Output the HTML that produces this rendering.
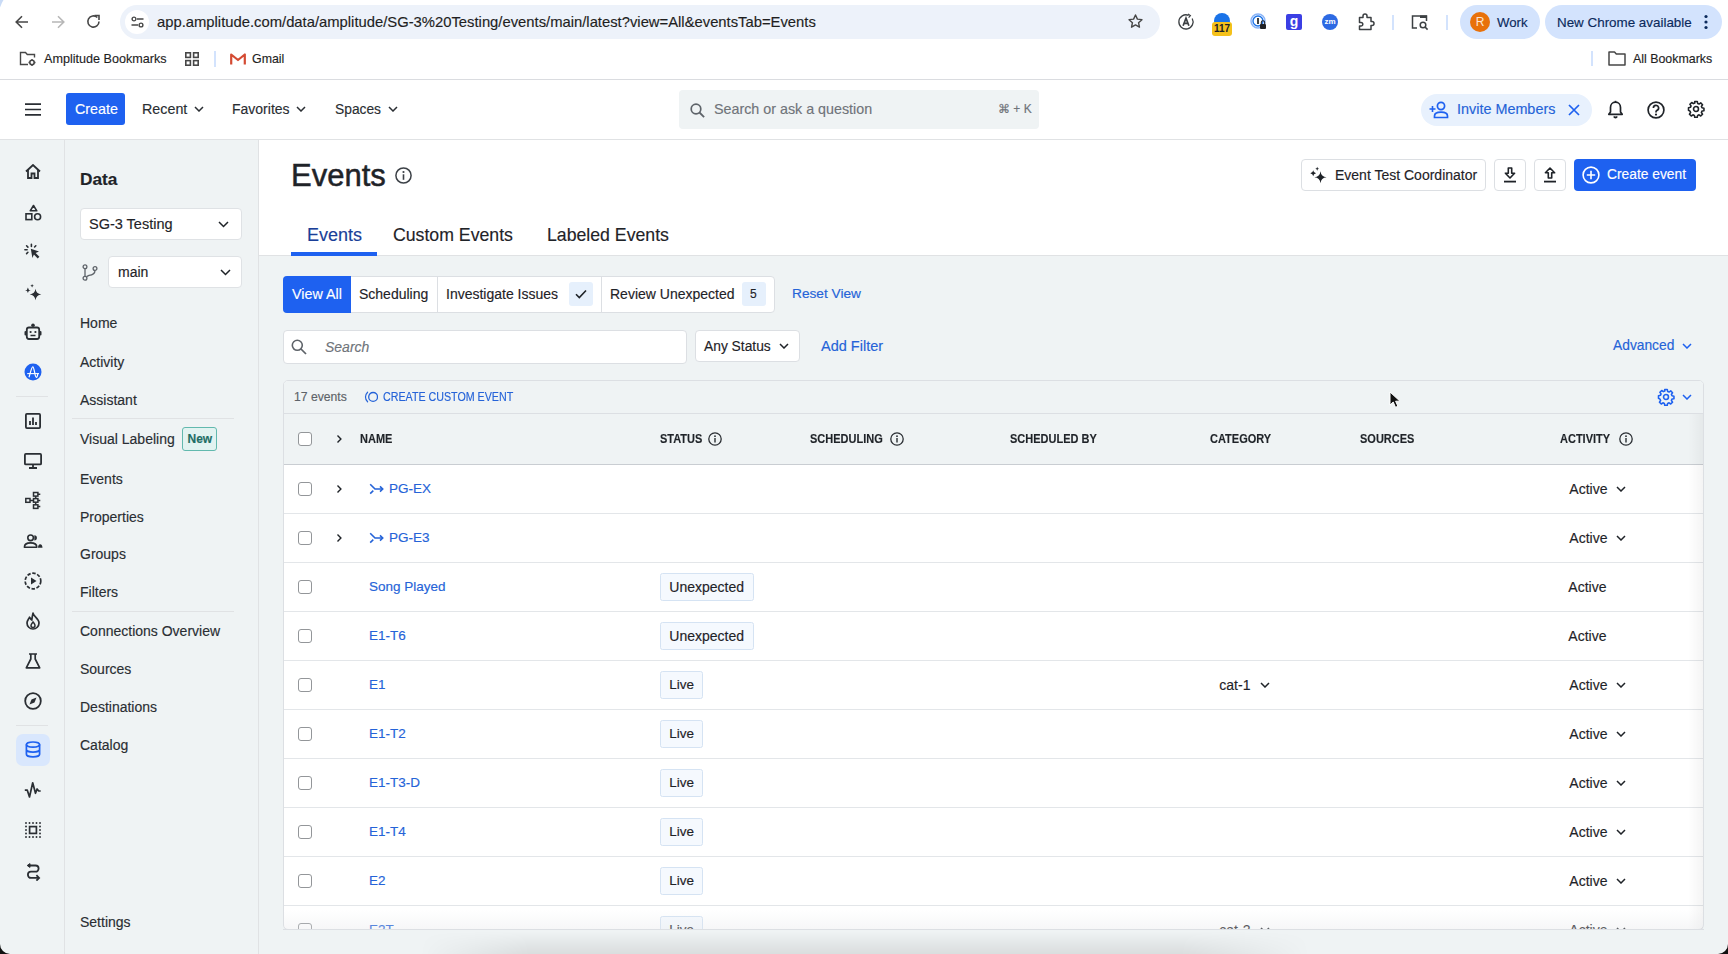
<!DOCTYPE html>
<html><head><meta charset="utf-8">
<style>
*{box-sizing:border-box;margin:0;padding:0}
html,body{width:1728px;height:954px;overflow:hidden;background:#fff;font-family:"Liberation Sans",sans-serif;color:#1f2328}
.a{position:absolute}
svg{display:block}
.t{position:absolute;white-space:nowrap;line-height:1;-webkit-text-stroke:0.15px currentColor}
</style></head><body>
<!-- CHROME TOOLBAR -->
<div class="a" id="chrome" style="left:0;top:0;width:1728px;height:80px;background:#fff;border-bottom:1px solid #dadce0">
  <!-- nav buttons -->
  <svg class="a" style="left:14px;top:14px" width="16" height="16" viewBox="0 0 16 16"><path d="M14 8H2.5M8 2.2L2.2 8L8 13.8" fill="none" stroke="#474747" stroke-width="1.6"/></svg>
  <svg class="a" style="left:50px;top:14px" width="16" height="16" viewBox="0 0 16 16"><path d="M2 8h11.5M8 2.2L13.8 8L8 13.8" fill="none" stroke="#b7b7b7" stroke-width="1.6"/></svg>
  <svg class="a" style="left:85px;top:13px" width="17" height="17" viewBox="0 0 17 17"><path d="M14 8.5A5.6 5.6 0 1 1 12.3 4.5" fill="none" stroke="#474747" stroke-width="1.6"/><path d="M9.5 2.5h4.5v4.5" fill="none" stroke="#474747" stroke-width="1.6"/></svg>
  <!-- url pill -->
  <div class="a" style="left:120px;top:5px;width:1040px;height:34px;border-radius:17px;background:#edf2fa"></div>
  <div class="a" style="left:125px;top:10px;width:24px;height:24px;border-radius:12px;background:#fff"></div>
  <svg class="a" style="left:131px;top:16px" width="13" height="12" viewBox="0 0 13 12"><circle cx="3" cy="3" r="1.9" fill="none" stroke="#474747" stroke-width="1.4"/><path d="M6 3h6.5M0.5 9H7" stroke="#474747" stroke-width="1.4"/><circle cx="10" cy="9" r="1.9" fill="none" stroke="#474747" stroke-width="1.4"/></svg>
  <div class="t" style="left:157px;top:15px;font-size:14.8px;color:#1f1f1f">app.amplitude.com/data/amplitude/SG-3%20Testing/events/main/latest?view=All&amp;eventsTab=Events</div>
  <svg class="a" style="left:1127px;top:13px" width="17" height="17" viewBox="0 0 24 24"><path d="M12 2.8l2.7 5.9 6.4.7-4.8 4.3 1.3 6.3L12 16.8 6.4 20l1.3-6.3L2.9 9.4l6.4-.7z" fill="none" stroke="#474747" stroke-width="2" stroke-linejoin="round"/></svg>

  <!-- extension icons -->
  <svg class="a" style="left:1177px;top:13px" width="18" height="18" viewBox="0 0 18 18"><path d="M15.2 5.5A7.1 7.1 0 1 1 11.6 2.3" fill="none" stroke="#3c4043" stroke-width="1.3"/><path d="M11 1l2.4 1.6-1.8 2" fill="none" stroke="#3c4043" stroke-width="1.2"/><path d="M6.1 12.8L9 5.2l2.9 7.6M7.1 10.3h3.8" fill="none" stroke="#3c4043" stroke-width="1.7"/></svg>
  <div class="a" style="left:1214px;top:13px;width:16px;height:16px;border-radius:8px;background:#1a73e8"></div>
  <div class="a" style="left:1212px;top:22px;width:20px;height:14px;border-radius:3px;background:#f5c11a;font-size:10px;font-weight:bold;color:#202124;text-align:center;line-height:14px">117</div>
  <svg class="a" style="left:1250px;top:13px" width="18" height="18" viewBox="0 0 18 18"><circle cx="8" cy="8" r="7" fill="none" stroke="#8ab4f8" stroke-width="1.5"/><circle cx="8" cy="8" r="5" fill="none" stroke="#1a73e8" stroke-width="1.4"/><rect x="7" y="5" width="2" height="6" fill="#3c4043"/><rect x="10" y="11" width="6" height="5" rx="1" fill="#202124"/><path d="M11.3 11V9.5a1.7 1.7 0 0 1 3.4 0V11" fill="none" stroke="#202124" stroke-width="1.1"/></svg>
  <div class="a" style="left:1286px;top:14px;width:16px;height:16px;border-radius:2px;background:#3b3fe4;color:#fff;font-size:14px;font-weight:bold;text-align:center;line-height:14px">g</div>
  <div class="a" style="left:1322px;top:14px;width:16px;height:16px;border-radius:8px;background:#2d6ae3;color:#fff;font-size:8px;font-weight:bold;text-align:center;line-height:16px">zm</div>
  <svg class="a" style="left:1358px;top:13px" width="18" height="18" viewBox="0 0 18 18"><path d="M1.5 4.5h3.5V3a2 2 0 0 1 4 0v1.5h4v4h1a2 2 0 0 1 0 4h-1v4h-11.5v-3.5h1.5a1.8 1.8 0 0 0 0-3.6H1.5z" fill="none" stroke="#3c4043" stroke-width="1.5" stroke-linejoin="round"/></svg>
  <div class="a" style="left:1392px;top:15px;width:2px;height:15px;background:#d3e3fd"></div>
  <svg class="a" style="left:1411px;top:14px" width="19" height="17" viewBox="0 0 19 17"><path d="M6 14H1.5V2h14v5" fill="none" stroke="#3c4043" stroke-width="1.5"/><rect x="9" y="1.5" width="7" height="2.5" fill="#3c4043"/><circle cx="12" cy="11" r="2.8" fill="none" stroke="#3c4043" stroke-width="1.5"/><path d="M14 13l2.6 2.6" stroke="#3c4043" stroke-width="1.6"/></svg>
  <div class="a" style="left:1446px;top:15px;width:2px;height:15px;background:#d3e3fd"></div>
  <div class="a" style="left:1460px;top:5px;width:80px;height:34px;border-radius:17px;background:#d3e3fd"></div>
  <div class="a" style="left:1470px;top:12px;width:20px;height:20px;border-radius:10px;background:#e8710a;color:#fde6d2;font-size:12px;text-align:center;line-height:20px">R</div>
  <div class="t" style="left:1497px;top:16px;font-size:13.2px;color:#0b2a5c">Work</div>
  <div class="a" style="left:1545px;top:5px;width:177px;height:34px;border-radius:17px;background:#d3e3fd"></div>
  <div class="t" style="left:1557px;top:16px;font-size:13.4px;color:#0b2a5c">New Chrome available</div>
  <svg class="a" style="left:1702px;top:14px" width="8" height="16" viewBox="0 0 8 16"><circle cx="4" cy="2.5" r="1.6" fill="#0b2a5c"/><circle cx="4" cy="8" r="1.6" fill="#0b2a5c"/><circle cx="4" cy="13.5" r="1.6" fill="#0b2a5c"/></svg>
  <!-- bookmarks bar -->
  <svg class="a" style="left:19px;top:51px" width="18" height="16" viewBox="0 0 18 16"><path d="M9 13.5H1.5V1.5h5l1.8 2h7.2v3" fill="none" stroke="#474747" stroke-width="1.4"/><circle cx="13" cy="11.5" r="2.2" fill="none" stroke="#474747" stroke-width="1.6"/><path d="M13 8v1.2M13 13.8V15M9.5 11.5h1.2M15.3 11.5h1.2" stroke="#474747" stroke-width="1.4"/></svg>
  <div class="t" style="left:44px;top:53px;font-size:12.6px;color:#1f1f1f">Amplitude Bookmarks</div>
  <svg class="a" style="left:185px;top:52px" width="14" height="14" viewBox="0 0 14 14"><rect x="0.8" y="0.8" width="4.6" height="4.6" fill="none" stroke="#474747" stroke-width="1.6"/><rect x="8.6" y="0.8" width="4.6" height="4.6" fill="none" stroke="#474747" stroke-width="1.6"/><rect x="0.8" y="8.6" width="4.6" height="4.6" fill="none" stroke="#474747" stroke-width="1.6"/><rect x="8.6" y="8.6" width="4.6" height="4.6" fill="none" stroke="#474747" stroke-width="1.6"/></svg>
  <div class="a" style="left:214px;top:51px;width:2px;height:16px;background:#d3e3fd"></div>
  <svg class="a" style="left:230px;top:53px" width="16" height="12" viewBox="0 0 16 12"><path d="M1.2 11.5V1.5L8 7l6.8-5.5v10" fill="none" stroke="#d44b33" stroke-width="2.2" stroke-linejoin="round"/></svg>
  <div class="t" style="left:252px;top:53px;font-size:12.4px;color:#1f1f1f">Gmail</div>
  <div class="a" style="left:1591px;top:51px;width:2px;height:15px;background:#d3e3fd"></div>
  <svg class="a" style="left:1608px;top:51px" width="18" height="15" viewBox="0 0 18 15"><path d="M1 1h5.5l1.8 2H17v11H1z" fill="none" stroke="#474747" stroke-width="1.5" stroke-linejoin="round"/></svg>
  <div class="t" style="left:1633px;top:53px;font-size:12.4px;color:#1f1f1f">All Bookmarks</div>
</div>

<!-- APP HEADER -->
<div class="a" style="left:0;top:80px;width:1728px;height:60px;background:#fff;border-bottom:1px solid #e0e2e4">
  <svg class="a" style="left:25px;top:23px" width="16" height="13" viewBox="0 0 16 13"><path d="M0 1.2h16M0 6.5h16M0 11.8h16" stroke="#2a2e33" stroke-width="1.7"/></svg>
  <div class="a" style="left:66px;top:13px;width:59px;height:32px;border-radius:3px;background:#1e61f0"></div>
  <div class="t" style="left:75px;top:22px;font-size:14.3px;color:#fff">Create</div>
  <div class="t" style="left:142px;top:22px;font-size:14.3px;color:#2a2e33">Recent</div>
  <svg class="a" style="left:194px;top:26px" width="10" height="6" viewBox="0 0 10 6"><path d="M1 1l4 4 4-4" fill="none" stroke="#2a2e33" stroke-width="1.5"/></svg>
  <div class="t" style="left:232px;top:22px;font-size:14px;color:#2a2e33">Favorites</div>
  <svg class="a" style="left:296px;top:26px" width="10" height="6" viewBox="0 0 10 6"><path d="M1 1l4 4 4-4" fill="none" stroke="#2a2e33" stroke-width="1.5"/></svg>
  <div class="t" style="left:335px;top:22.5px;font-size:13.8px;color:#2a2e33">Spaces</div>
  <svg class="a" style="left:388px;top:26px" width="10" height="6" viewBox="0 0 10 6"><path d="M1 1l4 4 4-4" fill="none" stroke="#2a2e33" stroke-width="1.5"/></svg>
  <!-- search -->
  <div class="a" style="left:679px;top:10px;width:360px;height:39px;border-radius:4px;background:#eff3f4"></div>
  <svg class="a" style="left:690px;top:23px" width="15" height="15" viewBox="0 0 15 15"><circle cx="6" cy="6" r="4.8" fill="none" stroke="#5e6369" stroke-width="1.7"/><path d="M9.5 9.5l4.6 4.6" stroke="#5e6369" stroke-width="1.8"/></svg>
  <div class="t" style="left:714px;top:22px;font-size:14.3px;color:#6f747a">Search or ask a question</div>
  <div class="t" style="left:998px;top:23px;font-size:12px;color:#6f747a">&#8984; + K</div>
  <!-- invite -->
  <div class="a" style="left:1421px;top:14px;width:171px;height:32px;border-radius:16px;background:#e8f1fd"></div>
  <svg class="a" style="left:1429px;top:21px" width="20" height="18" viewBox="0 0 20 18"><circle cx="12" cy="5" r="3.6" fill="none" stroke="#1e61f0" stroke-width="1.7"/><path d="M5.5 16.5v-1.5c0-2.3 2-3.8 6.5-3.8s6.5 1.5 6.5 3.8v1.5z" fill="none" stroke="#1e61f0" stroke-width="1.7"/><path d="M0.5 8h6M3.5 5v6" stroke="#1e61f0" stroke-width="1.6"/></svg>
  <div class="t" style="left:1457px;top:22px;font-size:14.4px;color:#2563d8">Invite Members</div>
  <svg class="a" style="left:1568px;top:24px" width="12" height="12" viewBox="0 0 12 12"><path d="M1 1l10 10M11 1L1 11" stroke="#1e61f0" stroke-width="1.7"/></svg>
  <svg class="a" style="left:1607px;top:20px" width="17" height="19" viewBox="0 0 17 19"><path d="M8.5 2.2c-3 0-5 2.3-5 5.3v4.5L1.8 14.3h13.4L13.5 12V7.5c0-3-2-5.3-5-5.3z" fill="none" stroke="#1f2328" stroke-width="1.7" stroke-linejoin="round"/><path d="M8.5 0.8v1.5" stroke="#1f2328" stroke-width="1.6"/><path d="M6.8 16.5a1.8 1.8 0 0 0 3.4 0" fill="#1f2328" stroke="#1f2328" stroke-width="1.4"/></svg>
  <svg class="a" style="left:1647px;top:21px" width="18" height="18" viewBox="0 0 18 18"><circle cx="9" cy="9" r="7.9" fill="none" stroke="#1f2328" stroke-width="1.7"/><path d="M6.4 7a2.6 2.6 0 1 1 3.6 2.4c-.7.3-1 .8-1 1.5v.6" fill="none" stroke="#1f2328" stroke-width="1.7"/><circle cx="9" cy="13.6" r="1.1" fill="#1f2328"/></svg>
  <svg class="a" style="left:1687px;top:20px" width="18" height="18" viewBox="0 0 24 24"><path d="M10.3 2h3.4l.5 2.6 1.9.8 2.2-1.5 2.4 2.4-1.5 2.2.8 1.9 2.6.5v3.4l-2.6.5-.8 1.9 1.5 2.2-2.4 2.4-2.2-1.5-1.9.8-.5 2.6h-3.4l-.5-2.6-1.9-.8-2.2 1.5-2.4-2.4 1.5-2.2-.8-1.9L2 13.7v-3.4l2.6-.5.8-1.9-1.5-2.2 2.4-2.4 2.2 1.5 1.9-.8z" fill="none" stroke="#1f2328" stroke-width="2.1" stroke-linejoin="round"/><circle cx="12" cy="12" r="3.3" fill="none" stroke="#1f2328" stroke-width="2.1"/></svg>
</div>
<!-- LEFT RAIL -->
<div class="a" id="rail" style="left:0;top:140px;width:65px;height:814px;background:#eff3f4;border-right:1px solid #e0e2e4">
  <!-- home 171 -->
  <svg class="a" style="left:25px;top:24px" width="16" height="15" viewBox="0 0 16 15"><path d="M1 7.5L8 1l7 6.5" fill="none" stroke="#2a2e33" stroke-width="1.8"/><path d="M3 6v8h3.5V9.5h3V14H13V6" fill="none" stroke="#2a2e33" stroke-width="1.8"/></svg>
  <!-- shapes 212 -->
  <svg class="a" style="left:25px;top:64px" width="17" height="17" viewBox="0 0 17 17"><path d="M8.5 1.5l3.3 5.3H5.2z" fill="none" stroke="#2a2e33" stroke-width="1.6" stroke-linejoin="round"/><rect x="1" y="9.8" width="5.8" height="5.8" fill="none" stroke="#2a2e33" stroke-width="1.6"/><circle cx="12.6" cy="12.7" r="3" fill="none" stroke="#2a2e33" stroke-width="1.6"/></svg>
  <!-- cursor 252 -->
  <svg class="a" style="left:24px;top:103px" width="17" height="17" viewBox="0 0 17 17"><path d="M6.8 5.8l8.2 2.6-3.4 1.5 3.8 3.8-1.7 1.7-3.8-3.8-1.5 3.4z" fill="#2a2e33"/><path d="M7.4 1.3v2.1M2.6 2.8l1.3 1.3M11.8 2.8l-1.2 1.2M0.9 6.8h2.2M2.6 10.6l1.3-1.3" stroke="#2a2e33" stroke-width="1.6" stroke-linecap="round"/></svg>
  <!-- sparkle 292 -->
  <svg class="a" style="left:23px;top:143px" width="20" height="20" viewBox="0 0 20 20"><path d="M12.5 5.8Q13.1 11 18.3 11.4Q13.1 11.9 12.5 17.2Q11.9 11.9 6.7 11.4Q11.9 11 12.5 5.8z" fill="#2a2e33"/><path d="M4.9 4.4Q5.2 7 7.7 7.3Q5.2 7.6 4.9 10.1Q4.6 7.6 2.1 7.3Q4.6 7 4.9 4.4z" fill="#2a2e33"/><path d="M9.1 1Q9.3 2.6 10.9 2.8Q9.3 3 9.1 4.6Q8.9 3 7.3 2.8Q8.9 2.6 9.1 1z" fill="#2a2e33"/></svg>
  <!-- robot 332 -->
  <svg class="a" style="left:24px;top:183px" width="18" height="18" viewBox="0 0 18 18"><circle cx="9" cy="2.2" r="1.8" fill="#2a2e33"/><rect x="2.8" y="4.5" width="12.4" height="11.5" rx="2.2" fill="none" stroke="#2a2e33" stroke-width="1.8"/><rect x="0.5" y="8" width="2" height="4.5" rx="1" fill="#2a2e33"/><rect x="15.5" y="8" width="2" height="4.5" rx="1" fill="#2a2e33"/><circle cx="6.6" cy="9" r="1.1" fill="#2a2e33"/><circle cx="11.4" cy="9" r="1.1" fill="#2a2e33"/><path d="M6.5 12.5h5" stroke="#2a2e33" stroke-width="1.5"/></svg>
  <!-- amplitude logo 371 -->
  <svg class="a" style="left:24px;top:223px" width="18" height="18" viewBox="0 0 18 18"><circle cx="9" cy="9" r="8.5" fill="#1e61f0"/><path d="M5 14.3C6.5 9.5 7.5 3.8 8.8 3.8c1.6 0 1.9 10.6 3.6 10.6.9 0 1.2-2.2 1.4-3.6" fill="none" stroke="#fff" stroke-width="1.2"/><path d="M3.2 10.6h11.8" stroke="#fff" stroke-width="1.1"/></svg>
  <div class="a" style="left:16px;top:256px;width:32px;height:1px;background:#e0e2e4"></div>
  <!-- chart 421 -->
  <svg class="a" style="left:25px;top:273px" width="16" height="16" viewBox="0 0 16 16"><rect x="0.9" y="0.9" width="14.2" height="14.2" rx="1" fill="none" stroke="#2a2e33" stroke-width="1.8"/><path d="M5 12V8M8 12V4.5M11 12V9" stroke="#2a2e33" stroke-width="1.8"/></svg>
  <!-- monitor 461 -->
  <svg class="a" style="left:24px;top:313px" width="18" height="16" viewBox="0 0 18 16"><rect x="0.9" y="0.9" width="16.2" height="10.5" rx="1" fill="none" stroke="#2a2e33" stroke-width="1.8"/><path d="M9 11.5v3.5M5 15h8" stroke="#2a2e33" stroke-width="1.8"/></svg>
  <!-- network 500 -->
  <svg class="a" style="left:24px;top:351px" width="18" height="19" viewBox="0 0 18 19"><rect x="1.8" y="7.5" width="4.2" height="3.8" fill="none" stroke="#2a2e33" stroke-width="1.5"/><rect x="9.5" y="1.5" width="4.4" height="3.6" fill="none" stroke="#2a2e33" stroke-width="1.5"/><rect x="9.5" y="7.6" width="4.4" height="3.6" fill="none" stroke="#2a2e33" stroke-width="1.5"/><rect x="9.5" y="13.8" width="4.4" height="3.6" fill="none" stroke="#2a2e33" stroke-width="1.5"/><path d="M6 9.4h3.5M11.7 5.1v2.5M11.7 11.2v2.6M13.9 3.3h2.4M13.9 9.4h2.4M13.9 15.6h2.4" stroke="#2a2e33" stroke-width="1.5"/></svg>
  <!-- users 540 -->
  <svg class="a" style="left:23px;top:392px" width="20" height="17" viewBox="0 0 20 17"><circle cx="7.6" cy="5.8" r="2.8" fill="none" stroke="#2a2e33" stroke-width="1.6"/><path d="M11.3 3.2a2.6 2.6 0 0 1 0 5.2z" fill="#2a2e33"/><path d="M1.4 15.2c0-2.6 2.6-4.3 6.2-4.3s6.2 1.7 6.2 4.3z" fill="none" stroke="#2a2e33" stroke-width="1.6" stroke-linejoin="round"/><path d="M15 15.8c0-2 .8-3.6 2.2-3.6s2.3 1.6 2.3 3.6z" fill="#2a2e33"/></svg>
  <!-- play 581 -->
  <svg class="a" style="left:24px;top:432px" width="18" height="18" viewBox="0 0 18 18"><circle cx="9" cy="9" r="7.8" fill="none" stroke="#2a2e33" stroke-width="1.7" stroke-dasharray="3.5 1.6"/><path d="M7 5.5v7l5.5-3.5z" fill="#2a2e33"/></svg>
  <!-- fire 621 -->
  <svg class="a" style="left:25px;top:472px" width="16" height="18" viewBox="0 0 16 18"><path d="M8 1.2C8.5 4.5 14 6.5 14 11a6 6 0 0 1-12 0c0-2.8 1.8-4 2.5-5.8.8 1.5 1.3 2.3 2.3 2.8C7 5.5 7.5 3.3 8 1.2z" fill="none" stroke="#2a2e33" stroke-width="1.7" stroke-linejoin="round"/><path d="M8 10c.9 1.2 2 2 2 3.5a2 2 0 0 1-4 0c0-1.3 1-2.3 2-3.5z" fill="none" stroke="#2a2e33" stroke-width="1.5"/></svg>
  <!-- flask 661 -->
  <svg class="a" style="left:25px;top:513px" width="16" height="16" viewBox="0 0 16 16"><path d="M4 1h8M5.8 1v5L1.3 14.8h13.4L10.2 6V1" fill="none" stroke="#2a2e33" stroke-width="1.7" stroke-linejoin="round"/></svg>
  <!-- compass 701 -->
  <svg class="a" style="left:24px;top:552px" width="18" height="18" viewBox="0 0 18 18"><circle cx="9" cy="9" r="7.8" fill="none" stroke="#2a2e33" stroke-width="1.8"/><path d="M12.5 5.5l-2 5-5 2 2-5z" fill="#2a2e33"/></svg>
  <div class="a" style="left:16px;top:585px;width:32px;height:1px;background:#e0e2e4"></div>
  <!-- database active 750 -->
  <div class="a" style="left:16px;top:594px;width:34px;height:32px;border-radius:7px;background:#d9e7fd"></div>
  <svg class="a" style="left:25px;top:601px" width="16" height="17" viewBox="0 0 16 17"><ellipse cx="8" cy="3.6" rx="6.6" ry="2.6" fill="none" stroke="#1e61f0" stroke-width="1.7"/><path d="M1.4 3.6v9.6c0 1.5 3 2.7 6.6 2.7s6.6-1.2 6.6-2.7V3.6M1.4 8.4c0 1.5 3 2.7 6.6 2.7s6.6-1.2 6.6-2.7" fill="none" stroke="#1e61f0" stroke-width="1.7"/></svg>
  <!-- pulse 790 -->
  <svg class="a" style="left:24px;top:641px" width="18" height="18" viewBox="0 0 18 18"><path d="M0.8 9.2h2.5l2.2 6.8 3.2-14.2 2.8 10.5 1.6-4.3 1.6 2h2" fill="none" stroke="#2a2e33" stroke-width="1.7" stroke-linejoin="round"/></svg>
  <!-- select 830 -->
  <svg class="a" style="left:25px;top:682px" width="16" height="16" viewBox="0 0 16 16"><g fill="#2a2e33"><circle cx="1" cy="1" r="0.95"/><circle cx="4.5" cy="1" r="0.95"/><circle cx="8" cy="1" r="0.95"/><circle cx="11.5" cy="1" r="0.95"/><circle cx="15" cy="1" r="0.95"/><circle cx="1" cy="15" r="0.95"/><circle cx="4.5" cy="15" r="0.95"/><circle cx="8" cy="15" r="0.95"/><circle cx="11.5" cy="15" r="0.95"/><circle cx="15" cy="15" r="0.95"/><circle cx="1" cy="4.5" r="0.95"/><circle cx="1" cy="8" r="0.95"/><circle cx="1" cy="11.5" r="0.95"/><circle cx="15" cy="4.5" r="0.95"/><circle cx="15" cy="8" r="0.95"/><circle cx="15" cy="11.5" r="0.95"/></g><rect x="4.6" y="4.6" width="6.8" height="6.8" fill="none" stroke="#2a2e33" stroke-width="1.7"/></svg>
  <!-- arrows 870 -->
  <svg class="a" style="left:26px;top:723px" width="15" height="18" viewBox="0 0 15 18"><path d="M2.5 2.5h7a3.1 3.1 0 0 1 0 6.2H5a3.1 3.1 0 0 0 0 6.2h7.5" fill="none" stroke="#2a2e33" stroke-width="1.8"/><path d="M4 0.6L1.2 2.5 4 4.4z" fill="#2a2e33" stroke="#2a2e33" stroke-width="1"/><path d="M10.4 12.2l2.7 2.7-2.7 2.7" fill="none" stroke="#2a2e33" stroke-width="1.8"/></svg>
</div>
<!-- SECOND NAV -->
<div class="a" id="nav" style="left:65px;top:140px;width:194px;height:814px;background:#eff3f4;border-right:1px solid #e0e2e4">
  <div class="t" style="left:15px;top:31px;font-size:17.3px;font-weight:bold;color:#1f2328">Data</div>
  <div class="a" style="left:15px;top:68px;width:162px;height:32px;border-radius:4px;background:#fff;border:1px solid #dfe2e5"></div>
  <div class="t" style="left:24px;top:77px;font-size:14.5px;color:#1f2328">SG-3 Testing</div>
  <svg class="a" style="left:153px;top:81px" width="11" height="7" viewBox="0 0 11 7"><path d="M1 1l4.5 4.5L10 1" fill="none" stroke="#1f2328" stroke-width="1.5"/></svg>
  <svg class="a" style="left:17px;top:124px" width="16" height="17" viewBox="0 0 16 17"><circle cx="3" cy="2.8" r="1.9" fill="none" stroke="#5e6369" stroke-width="1.3"/><circle cx="3" cy="14.2" r="1.9" fill="none" stroke="#5e6369" stroke-width="1.3"/><circle cx="13" cy="4.5" r="1.9" fill="none" stroke="#5e6369" stroke-width="1.3"/><path d="M3 4.7v7.6M13 6.4c0 3.5-3 4.5-6 5l-2.5 1.2" fill="none" stroke="#5e6369" stroke-width="1.3"/></svg>
  <div class="a" style="left:43px;top:116px;width:134px;height:32px;border-radius:4px;background:#fff;border:1px solid #dfe2e5"></div>
  <div class="t" style="left:53px;top:125px;font-size:14px;color:#1f2328">main</div>
  <div class="t" style="left:15px;top:176.4px;font-size:14px;color:#2a2e33">Home</div>
  <div class="t" style="left:15px;top:214.7px;font-size:14px;color:#2a2e33">Activity</div>
  <div class="t" style="left:15px;top:252.5px;font-size:14px;color:#2a2e33">Assistant</div>
  <div class="t" style="left:15px;top:292.4px;font-size:14px;color:#2a2e33">Visual Labeling</div>
  <div class="t" style="left:15px;top:331.7px;font-size:14px;color:#2a2e33">Events</div>
  <div class="t" style="left:15px;top:369.5px;font-size:14px;color:#2a2e33">Properties</div>
  <div class="t" style="left:15px;top:407.1px;font-size:14px;color:#2a2e33">Groups</div>
  <div class="t" style="left:15px;top:445.2px;font-size:14px;color:#2a2e33">Filters</div>
  <div class="t" style="left:15px;top:483.9px;font-size:14px;color:#2a2e33">Connections Overview</div>
  <div class="t" style="left:15px;top:522.1px;font-size:14px;color:#2a2e33">Sources</div>
  <div class="t" style="left:15px;top:560.2px;font-size:14px;color:#2a2e33">Destinations</div>
  <div class="t" style="left:15px;top:598.4px;font-size:14px;color:#2a2e33">Catalog</div>
  <div class="t" style="left:15px;top:774.7px;font-size:14px;color:#2a2e33">Settings</div>
  <div class="a" style="left:7px;top:278px;width:162px;height:1px;background:#e0e2e4"></div>
  <div class="a" style="left:7px;top:471px;width:162px;height:1px;background:#e0e2e4"></div>
  <div class="a" style="left:117px;top:287px;width:35px;height:24px;border-radius:3px;background:#e2f3f1;border:1px solid #62b9ae"></div>
  <div class="t" style="left:122.5px;top:293px;font-size:12px;font-weight:bold;color:#1e6e66">New</div>
  <svg class="a" style="left:155px;top:129px" width="11" height="7" viewBox="0 0 11 7"><path d="M1 1l4.5 4.5L10 1" fill="none" stroke="#1f2328" stroke-width="1.5"/></svg>
</div>
<!-- MAIN -->
<div class="a" id="main" style="left:259px;top:140px;width:1469px;height:814px;background:#eff3f4">
  <div class="a" style="left:0;top:0;width:1469px;height:116px;background:#fff;border-bottom:1px solid #e0e2e4"></div>
</div>

<div class="a" id="content" style="left:0;top:0;width:1728px;height:954px;pointer-events:none">
  <div class="t" style="left:291px;top:160px;font-size:31px;color:#1f2328;-webkit-text-stroke:0.5px #1f2328">Events</div>
  <svg class="a" style="left:395px;top:167px" width="17" height="17" viewBox="0 0 17 17"><circle cx="8.5" cy="8.5" r="7.6" fill="none" stroke="#3c4147" stroke-width="1.5"/><circle cx="8.5" cy="5" r="1.1" fill="#3c4147"/><path d="M8.5 7.3v5.5" stroke="#3c4147" stroke-width="1.6"/></svg>
  <!-- right actions -->
  <div class="a" style="left:1301px;top:159px;width:185px;height:32px;border-radius:4px;background:#fff;border:1px solid #dcdfe3"></div>
  <svg class="a" style="left:1309px;top:166px" width="19" height="18" viewBox="0 0 19 18"><path d="M11.5 5.2Q12.1 10.6 17.6 11.2Q12.1 11.8 11.5 17.2Q10.9 11.8 5.4 11.2Q10.9 10.6 11.5 5.2z" fill="#1f2328"/><path d="M4.2 4.2Q4.5 6.9 7.1 7.2Q4.5 7.5 4.2 10.2Q3.9 7.5 1.3 7.2Q3.9 6.9 4.2 4.2z" fill="#1f2328"/><path d="M8.2 0.8Q8.4 2.6 10.1 2.8Q8.4 3 8.2 4.8Q8 3 6.3 2.8Q8 2.6 8.2 0.8z" fill="#1f2328"/></svg>
  <div class="t" style="left:1335px;top:168px;font-size:14px;color:#1f2328">Event Test Coordinator</div>
  <div class="a" style="left:1494px;top:159px;width:32px;height:32px;border-radius:4px;background:#fff;border:1px solid #dcdfe3"></div>
  <svg class="a" style="left:1503px;top:167px" width="14" height="16" viewBox="0 0 14 16"><path d="M5.3 1h3.4v5.2h2.9L7 11 2.4 6.2h2.9z" fill="none" stroke="#1f2328" stroke-width="1.6" stroke-linejoin="round"/><path d="M1 14.6h12" stroke="#1f2328" stroke-width="1.8"/></svg>
  <div class="a" style="left:1534px;top:159px;width:32px;height:32px;border-radius:4px;background:#fff;border:1px solid #dcdfe3"></div>
  <svg class="a" style="left:1543px;top:167px" width="14" height="16" viewBox="0 0 14 16"><path d="M5.3 11V5.8H2.4L7 1l4.6 4.8H8.7V11z" fill="none" stroke="#1f2328" stroke-width="1.6" stroke-linejoin="round"/><path d="M1 14.6h12" stroke="#1f2328" stroke-width="1.8"/></svg>
  <div class="a" style="left:1574px;top:159px;width:122px;height:32px;border-radius:4px;background:#1e61f0"></div>
  <svg class="a" style="left:1582px;top:166px" width="18" height="18" viewBox="0 0 18 18"><circle cx="9" cy="9" r="7.9" fill="none" stroke="#fff" stroke-width="1.6"/><path d="M9 4.8v8.4M4.8 9h8.4" stroke="#fff" stroke-width="1.6"/></svg>
  <div class="t" style="left:1607px;top:168px;font-size:13.8px;color:#fff">Create event</div>
  <!-- tabs -->
  <div class="t" style="left:307px;top:226px;font-size:18px;color:#1a3f98">Events</div>
  <div class="t" style="left:393px;top:227px;font-size:17.7px;color:#1f2328">Custom Events</div>
  <div class="t" style="left:547px;top:227px;font-size:17.7px;color:#1f2328">Labeled Events</div>
  <div class="a" style="left:291px;top:252px;width:86px;height:4px;background:#1e61f0"></div>
  <!-- segments -->
  <div class="a" style="left:283px;top:276px;width:492px;height:37px;border-radius:4px;background:#fff;border:1px solid #dcdfe3"></div>
  <div class="a" style="left:283px;top:276px;width:68px;height:37px;border-radius:4px 0 0 4px;background:#1e61f0"></div>
  <div class="a" style="left:437px;top:276px;width:1px;height:37px;background:#dcdfe3"></div>
  <div class="a" style="left:601px;top:276px;width:1px;height:37px;background:#dcdfe3"></div>
  <div class="t" style="left:292px;top:287px;font-size:14.3px;color:#fff">View All</div>
  <div class="t" style="left:359px;top:287px;font-size:14px;color:#1f2328">Scheduling</div>
  <div class="t" style="left:446px;top:287px;font-size:14px;color:#1f2328">Investigate Issues</div>
  <div class="a" style="left:569px;top:282px;width:24px;height:24px;border-radius:3px;background:#e6f0fc"></div>
  <svg class="a" style="left:575px;top:289px" width="12" height="10" viewBox="0 0 12 10"><path d="M1 5.2l3.3 3.3L11 1.5" fill="none" stroke="#1f2328" stroke-width="1.6"/></svg>
  <div class="t" style="left:610px;top:287px;font-size:14px;color:#1f2328">Review Unexpected</div>
  <div class="a" style="left:742px;top:282px;width:24px;height:24px;border-radius:3px;background:#e6f0fc"></div>
  <div class="t" style="left:750px;top:288px;font-size:12px;color:#1f2328">5</div>
  <div class="t" style="left:792px;top:287px;font-size:13.7px;color:#2563d8">Reset View</div>
  <!-- filter row -->
  <div class="a" style="left:283px;top:330px;width:404px;height:34px;border-radius:4px;background:#fff;border:1px solid #dcdfe3"></div>
  <svg class="a" style="left:291px;top:339px" width="16" height="16" viewBox="0 0 16 16"><circle cx="6.3" cy="6.3" r="5" fill="none" stroke="#5e6369" stroke-width="1.6"/><path d="M10 10l5 5" stroke="#5e6369" stroke-width="1.7"/></svg>
  <div class="t" style="left:325px;top:340px;font-size:14px;font-style:italic;color:#6f747a">Search</div>
  <div class="a" style="left:695px;top:330px;width:105px;height:32px;border-radius:4px;background:#fff;border:1px solid #dcdfe3"></div>
  <div class="t" style="left:704px;top:340px;font-size:13.8px;color:#1f2328">Any Status</div>
  <svg class="a" style="left:779px;top:343px" width="10" height="6" viewBox="0 0 10 6"><path d="M1 1l4 4 4-4" fill="none" stroke="#1f2328" stroke-width="1.5"/></svg>
  <div class="t" style="left:821px;top:339px;font-size:14.5px;color:#2563d8">Add Filter</div>
  <div class="t" style="left:1613px;top:339px;font-size:13.8px;color:#2563d8">Advanced</div>
  <svg class="a" style="left:1682px;top:343px" width="10" height="6" viewBox="0 0 10 6"><path d="M1 1l4 4 4-4" fill="none" stroke="#1e61f0" stroke-width="1.5"/></svg>
</div>
<div class="a" id="table" style="left:283px;top:380px;width:1421px;height:550px;border:1px solid #dcdfe3;border-radius:5px;overflow:hidden;background:#fff">
<div class="a" style="left:0;top:0;width:1419px;height:33px;background:#eff3f4;border-bottom:1px solid #dcdfe3"></div>
<div class="a" style="left:0;top:33px;width:1419px;height:51px;background:#eff3f4;border-bottom:1px solid #c9cdd2"></div>
<div class="a" style="left:0;top:132.3px;width:1419px;height:1px;background:#e3e6e9"></div>
<div class="a" style="left:0;top:181.3px;width:1419px;height:1px;background:#e3e6e9"></div>
<div class="a" style="left:0;top:230.3px;width:1419px;height:1px;background:#e3e6e9"></div>
<div class="a" style="left:0;top:279.3px;width:1419px;height:1px;background:#e3e6e9"></div>
<div class="a" style="left:0;top:328.3px;width:1419px;height:1px;background:#e3e6e9"></div>
<div class="a" style="left:0;top:377.3px;width:1419px;height:1px;background:#e3e6e9"></div>
<div class="a" style="left:0;top:426.3px;width:1419px;height:1px;background:#e3e6e9"></div>
<div class="a" style="left:0;top:475.3px;width:1419px;height:1px;background:#e3e6e9"></div>
<div class="a" style="left:0;top:524.3px;width:1419px;height:1px;background:#e3e6e9"></div>
<div class="a" style="left:0;top:573.3px;width:1419px;height:1px;background:#e3e6e9"></div>
</div>
<div class="a" style="left:0;top:0;width:1728px;height:929px;overflow:hidden">
<div class="t" style="left:294px;top:390.9px;font-size:12.2px;color:#5e6369;">17 events</div>
<svg class="a" style="left:362px;top:390px" width="16" height="14" viewBox="0 0 16 14"><path d="M5.6 2.2A6.5 6.5 0 0 0 5.6 11.8" fill="none" stroke="#2563d8" stroke-width="1.2" stroke-linecap="round"/><circle cx="11.1" cy="6.9" r="4.4" fill="none" stroke="#2563d8" stroke-width="1.3"/></svg>
<div class="t" style="left:382.6px;top:391.0px;font-size:12.5px;color:#2563d8;transform:scaleX(0.855);transform-origin:0 0">CREATE CUSTOM EVENT</div>
<svg class="a" style="left:1657px;top:388px" width="18" height="18" viewBox="0 0 24 24"><path d="M10.3 2h3.4l.5 2.6 1.9.8 2.2-1.5 2.4 2.4-1.5 2.2.8 1.9 2.6.5v3.4l-2.6.5-.8 1.9 1.5 2.2-2.4 2.4-2.2-1.5-1.9.8-.5 2.6h-3.4l-.5-2.6-1.9-.8-2.2 1.5-2.4-2.4 1.5-2.2-.8-1.9L2 13.7v-3.4l2.6-.5.8-1.9-1.5-2.2 2.4-2.4 2.2 1.5 1.9-.8z" fill="none" stroke="#1e61f0" stroke-width="2.1" stroke-linejoin="round"/><circle cx="12" cy="12" r="3.3" fill="none" stroke="#1e61f0" stroke-width="2.1"/></svg>
<svg class="a" style="left:1681.5px;top:394.0px" width="10" height="6" viewBox="0 0 10 6"><path d="M1 1l4 4 4-4" fill="none" stroke="#1e61f0" stroke-width="1.5"/></svg>
<div class="a" style="left:298px;top:432.4px;width:13.5px;height:13.5px;border-radius:3px;border:1.7px solid #939699;background:#fff"></div>
<svg class="a" style="left:336px;top:434.0px" width="6" height="10" viewBox="0 0 6 10"><path d="M1.5 1.6l3.4 3.4-3.4 3.4" fill="none" stroke="#1f2328" stroke-width="1.4"/></svg>
<div class="t" style="left:360px;top:432.7px;font-size:12.5px;color:#1f2328;font-weight:bold;transform:scaleX(0.88);transform-origin:0 0">NAME</div>
<div class="t" style="left:660px;top:432.7px;font-size:12.5px;color:#1f2328;font-weight:bold;transform:scaleX(0.88);transform-origin:0 0">STATUS</div>
<div class="t" style="left:810px;top:432.7px;font-size:12.5px;color:#1f2328;font-weight:bold;transform:scaleX(0.88);transform-origin:0 0">SCHEDULING</div>
<div class="t" style="left:1010px;top:432.7px;font-size:12.5px;color:#1f2328;font-weight:bold;transform:scaleX(0.88);transform-origin:0 0">SCHEDULED BY</div>
<div class="t" style="left:1210px;top:432.7px;font-size:12.5px;color:#1f2328;font-weight:bold;transform:scaleX(0.88);transform-origin:0 0">CATEGORY</div>
<div class="t" style="left:1360px;top:432.7px;font-size:12.5px;color:#1f2328;font-weight:bold;transform:scaleX(0.88);transform-origin:0 0">SOURCES</div>
<div class="t" style="left:1560px;top:432.7px;font-size:12.5px;color:#1f2328;font-weight:bold;transform:scaleX(0.88);transform-origin:0 0">ACTIVITY</div>
<svg class="a" style="left:707.5px;top:432.0px" width="14" height="14" viewBox="0 0 14 14"><circle cx="7" cy="7" r="6.2" fill="none" stroke="#2a2e33" stroke-width="1.3"/><circle cx="7" cy="4.2" r="0.9" fill="#2a2e33"/><path d="M7 6v4.6" stroke="#2a2e33" stroke-width="1.4"/></svg>
<svg class="a" style="left:890px;top:432.0px" width="14" height="14" viewBox="0 0 14 14"><circle cx="7" cy="7" r="6.2" fill="none" stroke="#2a2e33" stroke-width="1.3"/><circle cx="7" cy="4.2" r="0.9" fill="#2a2e33"/><path d="M7 6v4.6" stroke="#2a2e33" stroke-width="1.4"/></svg>
<svg class="a" style="left:1619px;top:432.0px" width="14" height="14" viewBox="0 0 14 14"><circle cx="7" cy="7" r="6.2" fill="none" stroke="#2a2e33" stroke-width="1.3"/><circle cx="7" cy="4.2" r="0.9" fill="#2a2e33"/><path d="M7 6v4.6" stroke="#2a2e33" stroke-width="1.4"/></svg>
<div class="a" style="left:298px;top:482.3px;width:13.5px;height:13.5px;border-radius:3px;border:1.7px solid #939699;background:#fff"></div>
<svg class="a" style="left:336px;top:483.9px" width="6" height="10" viewBox="0 0 6 10"><path d="M1.5 1.6l3.4 3.4-3.4 3.4" fill="none" stroke="#1f2328" stroke-width="1.4"/></svg>
<svg class="a" style="left:369px;top:482.9px" width="15" height="12" viewBox="0 0 15 12"><path d="M1.2 1.2L6 6h7.6M1.2 10.6l3.1-2.9" fill="none" stroke="#2563d8" stroke-width="1.6"/><path d="M11 3.4L13.7 6 11 8.6" fill="none" stroke="#2563d8" stroke-width="1.6"/></svg>
<div class="t" style="left:389px;top:482.1px;font-size:13.5px;color:#2563d8;">PG-EX</div>
<div class="t" style="left:1569.3px;top:481.9px;font-size:14px;color:#1f2328;">Active</div>
<svg class="a" style="left:1615.5px;top:485.9px" width="10" height="6" viewBox="0 0 10 6"><path d="M1 1l4 4 4-4" fill="none" stroke="#1f2328" stroke-width="1.5"/></svg>
<div class="a" style="left:298px;top:531.3px;width:13.5px;height:13.5px;border-radius:3px;border:1.7px solid #939699;background:#fff"></div>
<svg class="a" style="left:336px;top:532.9px" width="6" height="10" viewBox="0 0 6 10"><path d="M1.5 1.6l3.4 3.4-3.4 3.4" fill="none" stroke="#1f2328" stroke-width="1.4"/></svg>
<svg class="a" style="left:369px;top:531.9px" width="15" height="12" viewBox="0 0 15 12"><path d="M1.2 1.2L6 6h7.6M1.2 10.6l3.1-2.9" fill="none" stroke="#2563d8" stroke-width="1.6"/><path d="M11 3.4L13.7 6 11 8.6" fill="none" stroke="#2563d8" stroke-width="1.6"/></svg>
<div class="t" style="left:389px;top:531.1px;font-size:13.5px;color:#2563d8;">PG-E3</div>
<div class="t" style="left:1569.3px;top:530.9px;font-size:14px;color:#1f2328;">Active</div>
<svg class="a" style="left:1615.5px;top:534.9px" width="10" height="6" viewBox="0 0 10 6"><path d="M1 1l4 4 4-4" fill="none" stroke="#1f2328" stroke-width="1.5"/></svg>
<div class="a" style="left:298px;top:580.3px;width:13.5px;height:13.5px;border-radius:3px;border:1.7px solid #939699;background:#fff"></div>
<div class="t" style="left:369px;top:580.1px;font-size:13.5px;color:#2563d8;">Song Played</div>
<div class="a" style="left:660px;top:573.1px;width:93.5px;height:27.5px;border-radius:2.5px;background:#f5f9fe;border:1px solid #d5e3f3"></div>
<div class="t" style="left:669.3px;top:579.9px;font-size:14px;color:#1f2328;">Unexpected</div>
<div class="t" style="left:1568.3px;top:579.9px;font-size:14px;color:#1f2328;">Active</div>
<div class="a" style="left:298px;top:629.3px;width:13.5px;height:13.5px;border-radius:3px;border:1.7px solid #939699;background:#fff"></div>
<div class="t" style="left:369px;top:629.1px;font-size:13.5px;color:#2563d8;">E1-T6</div>
<div class="a" style="left:660px;top:622.1px;width:93.5px;height:27.5px;border-radius:2.5px;background:#f5f9fe;border:1px solid #d5e3f3"></div>
<div class="t" style="left:669.3px;top:628.9px;font-size:14px;color:#1f2328;">Unexpected</div>
<div class="t" style="left:1568.3px;top:628.9px;font-size:14px;color:#1f2328;">Active</div>
<div class="a" style="left:298px;top:678.3px;width:13.5px;height:13.5px;border-radius:3px;border:1.7px solid #939699;background:#fff"></div>
<div class="t" style="left:369px;top:678.1px;font-size:13.5px;color:#2563d8;">E1</div>
<div class="a" style="left:660px;top:671.1px;width:43px;height:27.5px;border-radius:2.5px;background:#f5f9fe;border:1px solid #d5e3f3"></div>
<div class="t" style="left:669.3px;top:678.1px;font-size:13.5px;color:#1f2328;">Live</div>
<div class="t" style="left:1219.3px;top:677.9px;font-size:14px;color:#1f2328;">cat-1</div>
<svg class="a" style="left:1259.5px;top:681.9px" width="10" height="6" viewBox="0 0 10 6"><path d="M1 1l4 4 4-4" fill="none" stroke="#1f2328" stroke-width="1.5"/></svg>
<div class="t" style="left:1569.3px;top:677.9px;font-size:14px;color:#1f2328;">Active</div>
<svg class="a" style="left:1615.5px;top:681.9px" width="10" height="6" viewBox="0 0 10 6"><path d="M1 1l4 4 4-4" fill="none" stroke="#1f2328" stroke-width="1.5"/></svg>
<div class="a" style="left:298px;top:727.3px;width:13.5px;height:13.5px;border-radius:3px;border:1.7px solid #939699;background:#fff"></div>
<div class="t" style="left:369px;top:727.1px;font-size:13.5px;color:#2563d8;">E1-T2</div>
<div class="a" style="left:660px;top:720.1px;width:43px;height:27.5px;border-radius:2.5px;background:#f5f9fe;border:1px solid #d5e3f3"></div>
<div class="t" style="left:669.3px;top:727.1px;font-size:13.5px;color:#1f2328;">Live</div>
<div class="t" style="left:1569.3px;top:726.9px;font-size:14px;color:#1f2328;">Active</div>
<svg class="a" style="left:1615.5px;top:730.9px" width="10" height="6" viewBox="0 0 10 6"><path d="M1 1l4 4 4-4" fill="none" stroke="#1f2328" stroke-width="1.5"/></svg>
<div class="a" style="left:298px;top:776.3px;width:13.5px;height:13.5px;border-radius:3px;border:1.7px solid #939699;background:#fff"></div>
<div class="t" style="left:369px;top:776.1px;font-size:13.5px;color:#2563d8;">E1-T3-D</div>
<div class="a" style="left:660px;top:769.1px;width:43px;height:27.5px;border-radius:2.5px;background:#f5f9fe;border:1px solid #d5e3f3"></div>
<div class="t" style="left:669.3px;top:776.1px;font-size:13.5px;color:#1f2328;">Live</div>
<div class="t" style="left:1569.3px;top:775.9px;font-size:14px;color:#1f2328;">Active</div>
<svg class="a" style="left:1615.5px;top:779.9px" width="10" height="6" viewBox="0 0 10 6"><path d="M1 1l4 4 4-4" fill="none" stroke="#1f2328" stroke-width="1.5"/></svg>
<div class="a" style="left:298px;top:825.3px;width:13.5px;height:13.5px;border-radius:3px;border:1.7px solid #939699;background:#fff"></div>
<div class="t" style="left:369px;top:825.1px;font-size:13.5px;color:#2563d8;">E1-T4</div>
<div class="a" style="left:660px;top:818.1px;width:43px;height:27.5px;border-radius:2.5px;background:#f5f9fe;border:1px solid #d5e3f3"></div>
<div class="t" style="left:669.3px;top:825.1px;font-size:13.5px;color:#1f2328;">Live</div>
<div class="t" style="left:1569.3px;top:824.9px;font-size:14px;color:#1f2328;">Active</div>
<svg class="a" style="left:1615.5px;top:828.9px" width="10" height="6" viewBox="0 0 10 6"><path d="M1 1l4 4 4-4" fill="none" stroke="#1f2328" stroke-width="1.5"/></svg>
<div class="a" style="left:298px;top:874.3px;width:13.5px;height:13.5px;border-radius:3px;border:1.7px solid #939699;background:#fff"></div>
<div class="t" style="left:369px;top:874.1px;font-size:13.5px;color:#2563d8;">E2</div>
<div class="a" style="left:660px;top:867.1px;width:43px;height:27.5px;border-radius:2.5px;background:#f5f9fe;border:1px solid #d5e3f3"></div>
<div class="t" style="left:669.3px;top:874.1px;font-size:13.5px;color:#1f2328;">Live</div>
<div class="t" style="left:1569.3px;top:873.9px;font-size:14px;color:#1f2328;">Active</div>
<svg class="a" style="left:1615.5px;top:877.9px" width="10" height="6" viewBox="0 0 10 6"><path d="M1 1l4 4 4-4" fill="none" stroke="#1f2328" stroke-width="1.5"/></svg>
<div class="a" style="left:298px;top:923.3px;width:13.5px;height:13.5px;border-radius:3px;border:1.7px solid #939699;background:#fff"></div>
<div class="t" style="left:369px;top:923.1px;font-size:13.5px;color:#2563d8;">E2T</div>
<div class="a" style="left:660px;top:916.1px;width:43px;height:27.5px;border-radius:2.5px;background:#f5f9fe;border:1px solid #d5e3f3"></div>
<div class="t" style="left:669.3px;top:923.1px;font-size:13.5px;color:#1f2328;">Live</div>
<div class="t" style="left:1219.3px;top:922.9px;font-size:14px;color:#1f2328;">cat-2</div>
<svg class="a" style="left:1259.5px;top:926.9px" width="10" height="6" viewBox="0 0 10 6"><path d="M1 1l4 4 4-4" fill="none" stroke="#1f2328" stroke-width="1.5"/></svg>
<div class="t" style="left:1569.3px;top:922.9px;font-size:14px;color:#1f2328;">Active</div>
<svg class="a" style="left:1615.5px;top:926.9px" width="10" height="6" viewBox="0 0 10 6"><path d="M1 1l4 4 4-4" fill="none" stroke="#1f2328" stroke-width="1.5"/></svg>
<div class="a" style="left:1688px;top:414px;width:15px;height:516px;background:linear-gradient(to right,rgba(0,0,0,0),rgba(0,0,0,0.045))"></div>
<div class="a" style="left:284px;top:910px;width:1419px;height:20px;background:linear-gradient(to bottom,rgba(228,230,233,0),rgba(228,230,233,0.35))"></div>
</div>
<div class="a" style="left:283px;top:929px;width:1421px;height:1px;background:#dcdfe3"></div>

<div class="a" style="left:420px;top:932px;width:900px;height:22px;background:linear-gradient(to bottom,rgba(0,0,0,0),rgba(0,0,0,0.09));-webkit-mask-image:linear-gradient(to right,transparent 0,black 110px,black 760px,transparent 890px)"></div>
<svg class="a" style="left:0;top:944px" width="10" height="10" viewBox="0 0 10 10"><path d="M0 0A10 10 0 0 0 10 10H0z" fill="#111"/></svg>
<svg class="a" style="left:1718px;top:944px" width="10" height="10" viewBox="0 0 10 10"><path d="M10 0A10 10 0 0 1 0 10H10z" fill="#111"/></svg>
<svg class="a" style="left:1389px;top:391px" width="12" height="18" viewBox="0 0 12 18"><path d="M1 1v13l3.2-3 2.3 5.3 2.4-1-2.3-5.1h4.4z" fill="#111" stroke="#fff" stroke-width="1"/></svg>
<svg class="a" style="left:0;top:0" width="6" height="8" viewBox="0 0 6 8"><path d="M0 0H3.5Q1.5 3 0 7.5z" fill="#c9dbf6"/></svg>
</body></html>
